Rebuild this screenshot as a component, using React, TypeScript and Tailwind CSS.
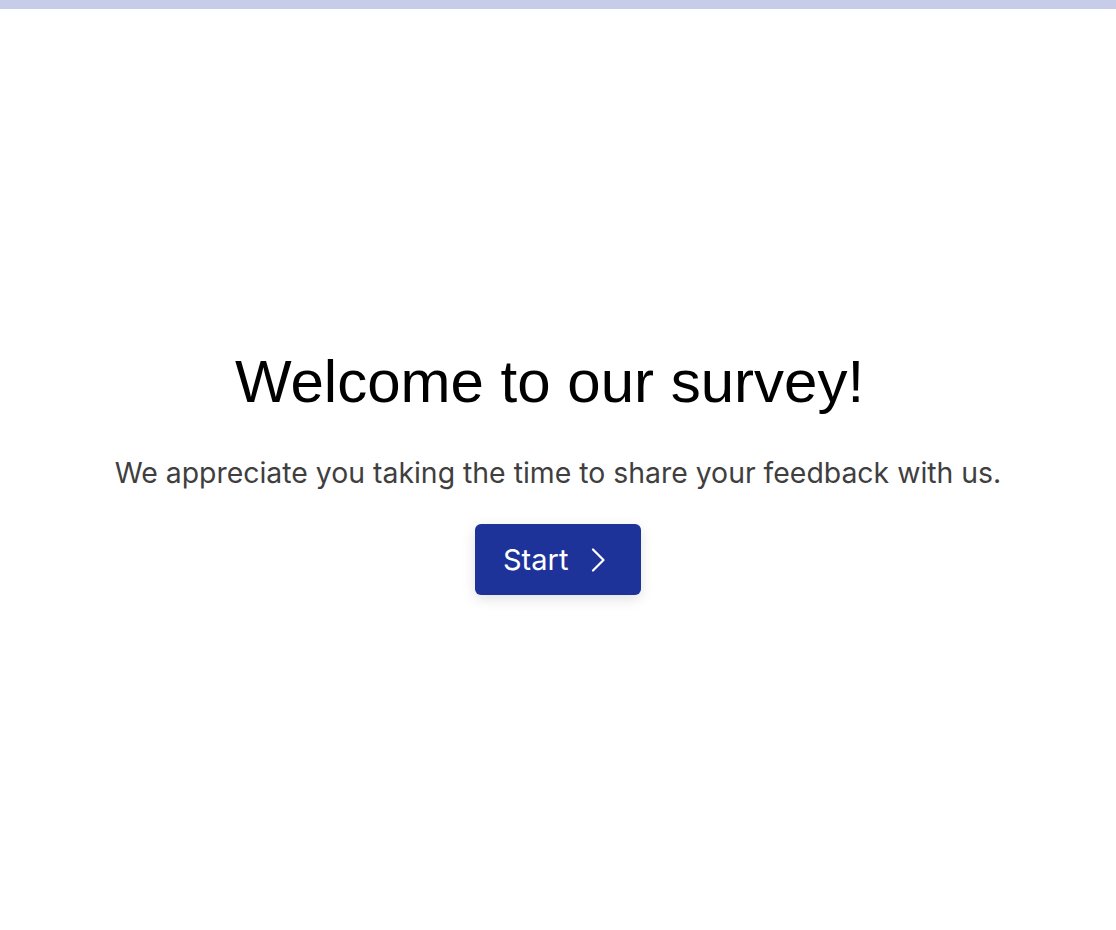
import React from "react";

export default function App() {
  return (
    <div className="flex h-[930px] w-full flex-col bg-white">
      <div className="h-[9px] w-full bg-[#c7cde8]" />
      <div className="flex flex-1 flex-col items-center justify-center pt-[2px]">
        <h1 className="mr-[17px] text-[60px] leading-[72px] text-black [font-family:'Liberation_Sans',Arial,sans-serif]">
          Welcome to our survey!
        </h1>
        <p className="mt-[37px] text-[28.4px] leading-[36px] text-[#3f3f3f] [font-family:Inter,sans-serif]">
          We appreciate you taking the time to share your feedback with us.
        </p>
        <button className="mt-[33px] flex h-[71px] w-[166px] items-center justify-start gap-[23px] rounded-[6px] bg-[#1d3399] pl-[28px] text-[29px] text-white shadow-[0_4px_14px_rgba(0,0,0,0.12)] [font-family:Inter,sans-serif]">
          <span>Start</span>
          <svg width="14" height="24" viewBox="0 0 14 24" fill="none" stroke="white" strokeWidth="2.2" strokeLinecap="round" strokeLinejoin="round">
            <path d="M2 1.5l10.5 10.5L2 22.5" />
          </svg>
        </button>
      </div>
    </div>
  );
}
